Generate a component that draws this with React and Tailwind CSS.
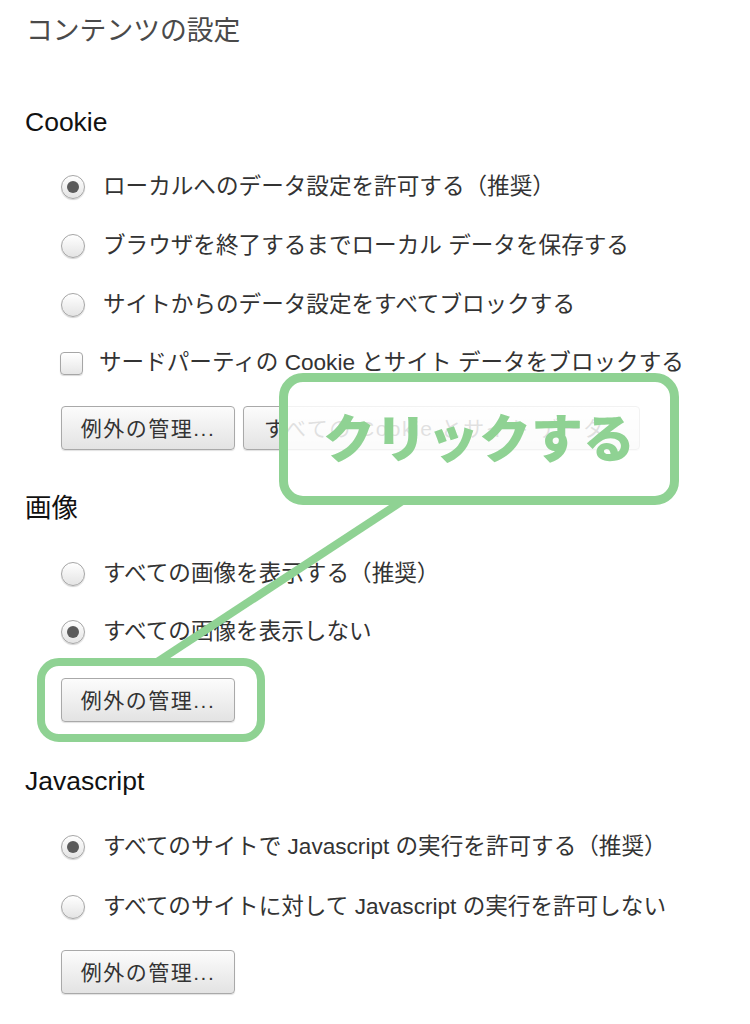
import React from "react";

function Radio({ checked, label, className }) {
  return (
    <div className={"flex items-center pl-[61px] " + className}>
      <span className="flex h-[24px] w-[24px] shrink-0 items-center justify-center rounded-full border border-[#a6a6a6] bg-linear-to-b from-[#ffffff] to-[#e4e4e4] shadow-[0_1px_1px_rgba(0,0,0,0.18)]">
        {checked && <span className="h-[12px] w-[12px] rounded-full bg-[#5b5b5b]" />}
      </span>
      <span className="ml-[18px] whitespace-nowrap text-[22.6px] leading-none text-[#333]">{label}</span>
    </div>
  );
}

function Btn({ children, className }) {
  return (
    <div className={"flex h-[44px] items-center whitespace-nowrap rounded-[4px] border border-[#a9a9a9] bg-linear-to-b from-[#fcfcfc] to-[#e3e3e3] text-[21px] leading-none tracking-[1.5px] text-[#333] shadow-[0_1px_1px_rgba(0,0,0,0.12)] " + className}>
      {children}
    </div>
  );
}

export default function App() {
  return (
    <div className="relative h-[1024px] w-[750px] overflow-hidden bg-white font-['Liberation_Sans','Noto_Sans_CJK_JP',sans-serif]">
      <div className="flex flex-col">
        <div className="mt-[11px] flex h-[40px] items-center pl-[26px] text-[26.8px] leading-none text-[#4a4a4a]">コンテンツの設定</div>

        <div className="mt-[51px] flex h-[40px] items-center pl-[25px] text-[26.5px] leading-none text-[#111]">Cookie</div>
        <Radio checked label="ローカルへのデータ設定を許可する（推奨）" className="mt-[25px] h-[40px]" />
        <Radio label="ブラウザを終了するまでローカル データを保存する" className="mt-[19px] h-[40px]" />
        <Radio label="サイトからのデータ設定をすべてブロックする" className="mt-[19px] h-[40px]" />
        <div className="mt-[18px] flex h-[40px] items-center pl-[60px]">
          <span className="h-[23px] w-[23px] shrink-0 rounded-[4px] border border-[#a6a6a6] bg-linear-to-b from-[#ffffff] to-[#e6e6e6] shadow-[0_1px_1px_rgba(0,0,0,0.15)]" />
          <span className="ml-[16px] whitespace-nowrap text-[22.6px] leading-none text-[#333]">サードパーティの Cookie とサイト データをブロックする</span>
        </div>
        <div className="mt-[23px] flex pl-[61px]">
          <Btn className="w-[174px] justify-center">例外の管理...</Btn>
          <Btn className="ml-[8px] w-[397px] pl-[20px]">すべての Cookie とサイト データ</Btn>
        </div>

        <div className="mt-[38px] flex h-[40px] items-center pl-[25px] text-[26.5px] leading-none text-[#111]">画像</div>
        <Radio label="すべての画像を表示する（推奨）" className="mt-[26px] h-[40px]" />
        <Radio checked label="すべての画像を表示しない" className="mt-[18px] h-[40px]" />
        <div className="mt-[26px] flex pl-[61px]">
          <Btn className="h-[42px] w-[174px] justify-center">例外の管理...</Btn>
        </div>

        <div className="mt-[39px] flex h-[40px] items-center pl-[25px] text-[26.5px] leading-none text-[#111]">Javascript</div>
        <Radio checked label="すべてのサイトで Javascript の実行を許可する（推奨）" className="mt-[26px] h-[40px]" />
        <Radio label="すべてのサイトに対して Javascript の実行を許可しない" className="mt-[20px] h-[40px]" />
        <div className="mt-[23px] flex pl-[61px]">
          <Btn className="h-[43px] w-[174px] justify-center">例外の管理...</Btn>
        </div>
      </div>

      {/* connector line */}
      <svg className="absolute left-0 top-0" width="750" height="1024" viewBox="0 0 750 1024">
        <line x1="404" y1="500" x2="157" y2="662" stroke="#8fd293" strokeWidth="8" />
      </svg>

      {/* callout */}
      <div className="absolute left-[279px] top-[373px] flex h-[132px] w-[400px] items-center justify-center rounded-[24px] border-[9px] border-[#8fd293] bg-white/85 pb-[6px]">
        <span className="whitespace-nowrap text-[52px] font-black leading-none text-[#8fd293] font-['Noto_Sans_CJK_JP',sans-serif]">クリックする</span>
      </div>

      {/* highlight */}
      <div className="absolute left-[37px] top-[658px] h-[84px] w-[228px] rounded-[22px] border-[8px] border-[#8fd293]" />
    </div>
  );
}
